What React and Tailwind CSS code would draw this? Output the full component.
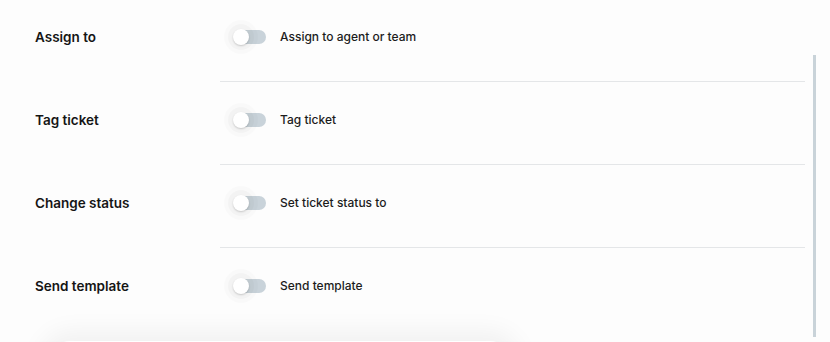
import React, { useState } from 'react'

const rows = [
  { label: 'Assign to', text: 'Assign to agent or team' },
  { label: 'Tag ticket', text: 'Tag ticket' },
  { label: 'Change status', text: 'Set ticket status to' },
  { label: 'Send template', text: 'Send template' },
]

function Toggle({ on, onClick }) {
  return (
    <button onClick={onClick} className="relative w-[33px] h-[16px] flex items-center shrink-0">
      <span className={`absolute left-[3px] w-[30px] h-[14px] rounded-full ${on ? 'bg-[#3b82f6]' : 'bg-[#c9d3da]'}`} />
      <span
        className={`absolute top-0 w-[16px] h-[16px] rounded-full bg-white shadow-[0_1px_2px_rgba(0,0,0,0.18),0_0_0_5px_rgba(0,0,0,0.025),0_0_0_9px_rgba(0,0,0,0.015)] ${on ? 'left-[17px]' : 'left-0'}`}
      />
    </button>
  )
}

export default function App() {
  const [state, setState] = useState([false, false, false, false])

  return (
    <div className="relative w-[830px] h-[342px] overflow-hidden bg-[#fdfdfd] font-['Inter',sans-serif] text-[#151515]">
      <div className="w-[805px]">
        {rows.map((r, i) => (
          <div key={r.label} className="flex">
            <div className={`w-[220px] pl-[35px] ${i === 0 ? 'pt-[27px]' : 'pt-[28px]'}`}>
              <span className="block text-[13.5px] leading-[20px] font-semibold">{r.label}</span>
            </div>
            <div
              className={`flex-1 ${i === 0 ? 'h-[82px] pt-[27px]' : 'h-[83px] pt-[28px]'} ${i < rows.length - 1 ? 'border-b border-[#e4e6e8]' : ''}`}
            >
              <div className="flex items-center h-[20px] pl-[13px] gap-[14px]">
                <Toggle
                  on={state[i]}
                  onClick={() => setState(s => s.map((v, j) => (j === i ? !v : v)))}
                />
                <span className="text-[12px] leading-[20px] font-medium text-[#1c1c1c]">{r.text}</span>
              </div>
            </div>
          </div>
        ))}
        <div className="ml-[50px] w-[460px] h-[40px] mt-[10px] rounded-[20px] bg-white shadow-[0_0_24px_10px_rgba(0,0,0,0.05)]" />
      </div>
      <div className="absolute left-[813px] top-[55px] w-[3px] h-[282px] bg-[#c9d3d9]" />
    </div>
  )
}
